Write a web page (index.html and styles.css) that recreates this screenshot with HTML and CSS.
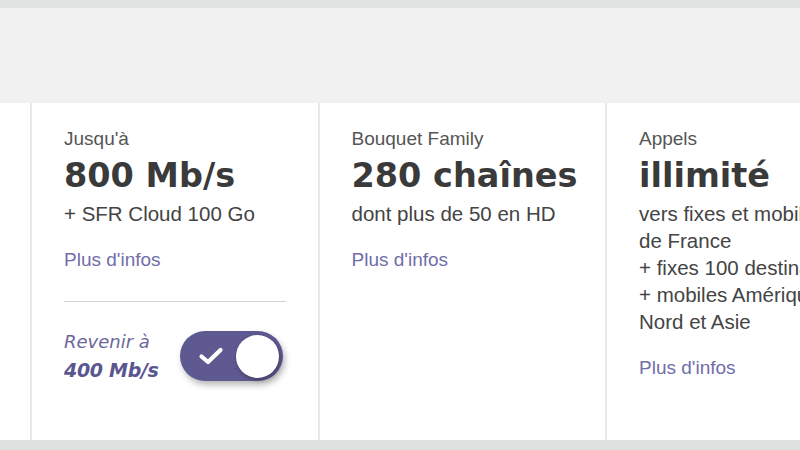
FILE: index.html
```html
<!DOCTYPE html>
<html lang="fr">
<head>
<meta charset="utf-8">
<title>Offre SFR</title>
<link rel="stylesheet" href="styles.css">
</head>
<body>
<div class="page">
  <div class="topbar"></div>
  <div class="hero"></div>
  <div class="offers">
    <div class="spacer"></div>
    <div class="card">
      <div class="label">Jusqu'à</div>
      <div class="big">800 Mb/s</div>
      <div class="desc">+ SFR Cloud 100 Go</div>
      <a class="link" href="#">Plus d'infos</a>
      <div class="sep"></div>
      <div class="switch-row">
        <div class="switch-text">
          <div class="sw-line">Revenir à</div>
          <div class="sw-strong">400 Mb/s</div>
        </div>
        <div class="toggle">
          <svg class="check" width="26" height="20" viewBox="0 0 26 20"><path d="M3.5 10.5 L10 16 L22.5 4" fill="none" stroke="#fff" stroke-width="4.2" stroke-linecap="round" stroke-linejoin="round"/></svg>
          <div class="knob"></div>
        </div>
      </div>
    </div>
    <div class="card">
      <div class="label">Bouquet Family</div>
      <div class="big">280 chaînes</div>
      <div class="desc">dont plus de 50 en HD</div>
      <a class="link" href="#">Plus d'infos</a>
    </div>
    <div class="card">
      <div class="label">Appels</div>
      <div class="big">illimité</div>
      <div class="desc nowrap">vers fixes et mobiles<br>de France<br>+ fixes 100 destinations<br>+ mobiles Amérique du<br>Nord et Asie</div>
      <a class="link" href="#">Plus d'infos</a>
    </div>
  </div>
  <div class="footer"></div>
</div>
</body>
</html>
```
FILE: styles.css
```css
html, body {
  margin: 0;
  padding: 0;
  overflow: hidden;
}
body {
  font-family: "Liberation Sans", Arial, sans-serif;
  background: #ffffff;
}
.page {
  width: 800px;
  height: 450px;
  overflow: hidden;
  display: flex;
  flex-direction: column;
}
.topbar {
  height: 8px;
  background: #e1e3e2;
  flex: none;
}
.hero {
  height: 95px;
  background: #f1f1f1;
  flex: none;
}
.offers {
  height: 337px;
  flex: none;
  display: flex;
  background: #fff;
}
.spacer {
  flex: 0 0 30px;
}
.card {
  flex: 0 0 287.5px;
  min-width: 0;
  box-sizing: border-box;
  border-left: 2px solid #e8e8e8;
  padding: 25px 20px 0 32px;
  display: flex;
  flex-direction: column;
  align-items: flex-start;
}
.label {
  font-size: 19px;
  line-height: 22px;
  color: #555555;
}
.big {
  margin-top: 6px;
  font-family: "DejaVu Sans", sans-serif;
  font-weight: bold;
  font-size: 33.5px;
  line-height: 40px;
  color: #3a3a3a;
  white-space: nowrap;
}
.desc {
  margin-top: 4px;
  font-size: 20.5px;
  line-height: 27px;
  color: #444444;
}
.nowrap {
  white-space: nowrap;
}
.link {
  margin-top: 22px;
  font-size: 19px;
  line-height: 22px;
  color: #716da8;
  text-decoration: none;
}
.sep {
  margin-top: 30px;
  width: 222px;
  height: 1px;
  background: #d2d2d2;
}
.switch-row {
  margin-top: 26px;
  display: flex;
  align-items: center;
  gap: 21px;
}
.switch-text {
  font-family: "DejaVu Sans", sans-serif;
  font-style: italic;
  line-height: 28px;
  white-space: nowrap;
}
.sw-line {
  font-size: 18px;
  color: #6b6799;
}
.sw-strong {
  font-size: 19px;
  font-weight: bold;
  color: #5a5690;
  letter-spacing: -0.3px;
}
.toggle {
  position: relative;
  flex: none;
  width: 103px;
  height: 50px;
  border-radius: 25px;
  background: #5e5a91;
  box-shadow: 2px 4px 6px rgba(0, 0, 0, 0.28);
  display: flex;
  align-items: center;
  justify-content: space-between;
  padding: 0 4px 0 18px;
  box-sizing: border-box;
}
.check {
  display: block;
}
.knob {
  width: 43px;
  height: 43px;
  border-radius: 50%;
  background: #ffffff;
  box-shadow: 1px 2px 4px rgba(0, 0, 0, 0.35);
}
.footer {
  flex: 1;
  background: #e0e2e1;
}
```
